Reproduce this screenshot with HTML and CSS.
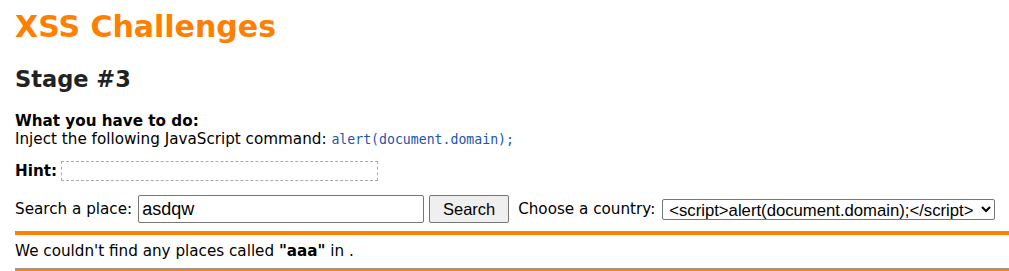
FILE: index.html
```html
<!DOCTYPE html>
<html lang="en">
<head>
  <meta charset="UTF-8">
  <title>XSS Challenges - Stage #3</title>
  <link rel="stylesheet" href="styles.css">
</head>
<body>

  <h1 class="title">XSS Challenges</h1>
  <h2 class="stage">Stage #3</h2>

  <div class="task">
    <b>What you have to do:</b><br>
    Inject the following JavaScript command: <code class="cmd">alert(document.domain);</code>
  </div>

  <div class="hint">
    <b>Hint:</b> <span class="hint-box"></span>
  </div>

  <form class="search" onsubmit="return false;">
    Search a place:
    <input class="field" type="text" name="p1" value="asdqw">
    <input class="btn" type="submit" value="Search">
    <span class="country">Choose a country:</span>
    <select class="pick" name="p2">
      <option>&lt;script&gt;alert(document.domain);&lt;/script&gt;</option>
    </select>
  </form>

  <hr class="rule">
  <div class="result">We couldn't find any places called <b>"aaa"</b> in .</div>
  <hr class="rule">

</body>
</html>
```

FILE: styles.css
```css
body {
  margin: 0 0 0 15px;
  font-family: "DejaVu Sans", Verdana, sans-serif;
  font-size: 15.2px;
  color: #000;
  background: #fff;
}

.title {
  color: #ff8000;
  font-size: 30px;
  line-height: 35px;
  margin: 9px 0 0;
}

.stage {
  color: #222;
  font-size: 22.5px;
  line-height: 26px;
  margin: 22px 0 0;
}

.task {
  margin-top: 20px;
  line-height: 18px;
}

.cmd {
  font-family: "DejaVu Sans Mono", monospace;
  font-size: 13.2px;
  color: #2255aa;
}

.hint {
  margin-top: 12px;
  display: flex;
  align-items: center;
  gap: 4px;
  line-height: 18px;
}

.hint-box {
  display: inline-block;
  width: 315px;
  height: 18px;
  border: 1px dashed #aaa;
}

.search {
  margin-top: 14px;
  display: flex;
  align-items: center;
}

.field {
  box-sizing: border-box;
  width: 286px;
  height: 28px;
  margin: 0 5px 0 6px;
  font: 18px "Liberation Sans", Arial, sans-serif;
  border: 1px solid #767676;
  border-radius: 2px;
  padding: 1px 3px;
}

.btn {
  box-sizing: border-box;
  width: 80px;
  height: 28px;
  font: 16.5px "Liberation Sans", Arial, sans-serif;
  padding: 0;
  border: 1px solid #767676;
  border-radius: 2px;
  background: #efefef;
}

.country {
  margin: 0 7px 0 9px;
}

.pick {
  box-sizing: border-box;
  width: 333px;
  height: 21px;
  padding: 0 0 0 2px;
  font: 16.7px "Liberation Sans", Arial, sans-serif;
  border: 1px solid #767676;
  border-radius: 2px;
  background: #fff;
}

.rule {
  margin: 8px 0 0;
  height: 3px;
  border: 0;
  border-top: 1px solid #999;
  background: #ff8000;
}

.result {
  padding-top: 8px;
  line-height: 17px;
}
```
